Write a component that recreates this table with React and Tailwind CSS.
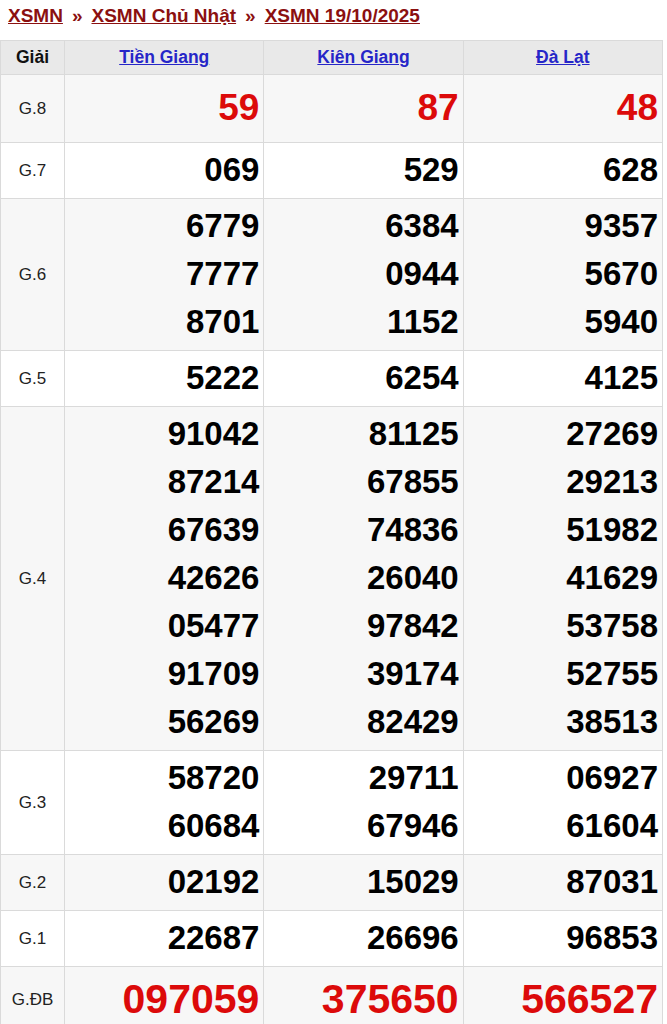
import React from 'react';

const PROVINCES = ['Tiền Giang', 'Kiên Giang', 'Đà Lạt'];

const ROWS = [
  { label: 'G.8', kind: 'g8', values: [['59'], ['87'], ['48']] },
  { label: 'G.7', values: [['069'], ['529'], ['628']] },
  { label: 'G.6', values: [['6779', '7777', '8701'], ['6384', '0944', '1152'], ['9357', '5670', '5940']] },
  { label: 'G.5', values: [['5222'], ['6254'], ['4125']] },
  {
    label: 'G.4',
    values: [
      ['91042', '87214', '67639', '42626', '05477', '91709', '56269'],
      ['81125', '67855', '74836', '26040', '97842', '39174', '82429'],
      ['27269', '29213', '51982', '41629', '53758', '52755', '38513'],
    ],
  },
  { label: 'G.3', values: [['58720', '60684'], ['29711', '67946'], ['06927', '61604']] },
  { label: 'G.2', values: [['02192'], ['15029'], ['87031']] },
  { label: 'G.1', values: [['22687'], ['26696'], ['96853']] },
  { label: 'G.ĐB', kind: 'db', values: [['097059'], ['375650'], ['566527']] },
];

function NumberCell({ nums, kind }) {
  let cls = 'text-[33px] leading-[48px] text-black';
  if (kind === 'g8') cls = 'text-[37px] leading-[60px] text-[#dc0a0a]';
  if (kind === 'db') cls = 'text-[41px] leading-[58px] text-[#dc0a0a]';
  return (
    <td className="border border-[#dadada] pt-[3px] pb-[4px] pr-[4px] text-right align-top">
      {nums.map((n, i) => (
        <div key={i} className={`font-bold ${cls}`}>
          {n}
        </div>
      ))}
    </td>
  );
}

export default function App() {
  return (
    <div className="bg-white font-['Liberation_Sans',Arial,sans-serif] w-[667px]">
      {/* Breadcrumb */}
      <div className="flex items-baseline pl-2 pt-[5px] pb-[13px] text-[19px] font-bold leading-[22px] text-[#8b1010]">
        <a href="#" className="underline">XSMN</a>
        <span className="mx-[9px]">»</span>
        <a href="#" className="underline">XSMN Chủ Nhật</a>
        <span className="mx-[9px]">»</span>
        <a href="#" className="underline">XSMN 19/10/2025</a>
      </div>

      <table className="w-[663px] table-fixed border-collapse border border-[#dadada]">
        <colgroup>
          <col className="w-[64px]" />
          <col className="w-[199px]" />
          <col className="w-[199px]" />
          <col className="w-[199px]" />
        </colgroup>
        <thead>
          <tr className="bg-[#e9e9e9] h-[34px]">
            <th className="border border-[#dadada] text-[17.5px] font-bold text-[#111]">Giải</th>
            {PROVINCES.map((p) => (
              <th key={p} className="border border-[#dadada] text-[17.5px] font-bold">
                <a href="#" className="text-[#2626c8] underline">{p}</a>
              </th>
            ))}
          </tr>
        </thead>
        <tbody>
          {ROWS.map((row, i) => (
            <tr key={row.label} className={i % 2 === 0 ? 'bg-[#f7f7f7]' : 'bg-white'}>
              <td className="border border-[#dadada] text-center align-middle text-[17px] text-[#222]">
                {row.label}
              </td>
              {row.values.map((nums, j) => (
                <NumberCell key={j} nums={nums} kind={row.kind} />
              ))}
            </tr>
          ))}
        </tbody>
      </table>
    </div>
  );
}
